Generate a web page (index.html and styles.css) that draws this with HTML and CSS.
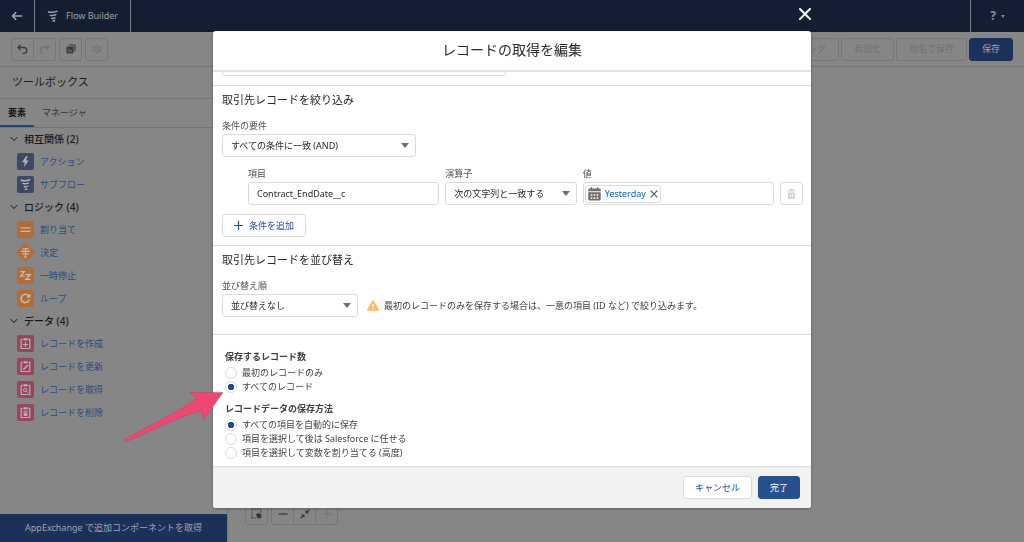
FILE: index.html
```html
<!DOCTYPE html>
<html lang="ja">
<head>
    <meta charset="UTF-8">
    <meta name="viewport" content="width=device-width, initial-scale=1.0">
    <title>Flow Builder</title>
    <link rel="stylesheet" href="styles.css">
</head>
<body>
    <div class="app">
        <header class="topbar">
            <a class="topbar-back" href="#" aria-label="戻る">
                <svg width="12" height="10" viewBox="0 0 12 10"><path d="M11 5H1.5M5.2 1.2L1.4 5l3.8 3.8" fill="none" stroke="currentColor" stroke-width="1.5"/></svg>
            </a>
            <div class="topbar-name">
                <svg width="12" height="12" viewBox="0 0 12 12"><path d="M1 1.800c2.500 1.200 5.500 .6 9.600-.7M2.800 5.200c2.200.7 4.200.3 6.600-.8M4.200 8.300c1.500.4 2.800.2 4.300-.5M5.600 10.900c1 .1 1.800 0 2.600-.4" fill="none" stroke="currentColor" stroke-width="1.500"/></svg>
                <span>Flow Builder</span>
            </div>
            <button class="topbar-help" type="button" aria-label="ヘルプ"><span>?</span><i class="caret"></i></button>
        </header>

        <div class="toolbar">
            <div class="group">
                <button class="icon-btn" type="button" aria-label="元に戻す">
                    <svg width="11" height="11" viewBox="0 0 11 11"><path d="M3.5 1L1 3.5 3.5 6M1.2 3.5h5.6a2.9 2.9 0 0 1 0 5.8H5.5" fill="none" stroke="currentColor" stroke-width="1.3"/></svg>
                </button>
                <button class="icon-btn" type="button" aria-label="やり直し" disabled>
                    <svg width="11" height="11" viewBox="0 0 11 11"><path d="M7.5 1L10 3.5 7.5 6M9.8 3.5H4.2a2.9 2.9 0 0 0 0 5.8h1.3" fill="none" stroke="currentColor" stroke-width="1.3"/></svg>
                </button>
            </div>
            <button class="icon-btn" type="button" aria-label="コピー">
                <svg width="10" height="10" viewBox="0 0 10 10"><path d="M2.5 1.2Q2.5.5 3.2.5h5.6q.7 0 .7.7v5.6q0 .7-.7.7H8.4V1.6H2.5z" fill="currentColor"/><rect x=".5" y="2.4" width="7" height="7.2" rx=".8" fill="currentColor"/><path d="M2 5h1.3M2 6.4h3.8M2 7.8h3.8" stroke="#888" stroke-width=".6"/></svg>
            </button>
            <button class="icon-btn" type="button" aria-label="設定" disabled>
                <svg width="10" height="10" viewBox="0 0 10 10"><circle cx="5" cy="5" r="3.2" fill="none" stroke="currentColor" stroke-width="1"/><circle cx="5" cy="5" r="1.2" fill="none" stroke="currentColor" stroke-width=".8"/><path d="M5 .4v1.2M5 8.4v1.2M1 2.7l1.1.6M7.9 6.7l1.1.6M1 7.3l1.1-.6M7.9 3.3L9 2.7" stroke="currentColor" stroke-width="1.5"/></svg>
            </button>
            <div class="toolbar-actions">
                <button class="btn-dim" type="button" disabled>デバッグ</button>
                <button class="btn-dim" type="button" disabled>有効化</button>
                <button class="btn-dim" type="button" disabled>別名で保存</button>
                <button class="btn-dim btn-save" type="button">保存</button>
            </div>
        </div>

        <div class="main">
            <aside class="sidebar">
                <h2 class="sidebar-title">ツールボックス</h2>
                <nav class="tabs">
                    <a class="tab active" href="#">要素</a>
                    <a class="tab" href="#">マネージャ</a>
                </nav>
                <div class="elements">
                    <h3 class="group-title"><svg width="8" height="6" viewBox="0 0 8 6"><path d="M.7 1L4 4.6 7.3 1" fill="none" stroke="currentColor"/></svg>相互関係 (2)</h3>
                    <ul class="items">
                        <li><a href="#"><svg class="tile" viewBox="0 0 17 17"><rect width="17" height="17" rx="2" fill="#3d4866"/><path d="M9.3 3L5 9.2h2.8L6.9 14l4.9-6.5H8.9L10.7 3z" fill="#b4b4b4"/></svg>アクション</a></li>
                        <li><a href="#"><svg class="tile" viewBox="0 0 17 17"><rect width="17" height="17" rx="2" fill="#3d4866"/><path d="M3.800 4c3 1.500 6 1 9.400-.5M5.400 7.400c2.200.8 4.300.4 6.400-.5M6.800 10.500c1.400.4 2.800.2 4.200-.4M7.800 13.300c1 .2 1.800 0 2.600-.4" fill="none" stroke="#b4b4b4" stroke-width="1.500"/></svg>サブフロー</a></li>
                    </ul>
                    <h3 class="group-title"><svg width="8" height="6" viewBox="0 0 8 6"><path d="M.7 1L4 4.6 7.3 1" fill="none" stroke="currentColor"/></svg>ロジック (4)</h3>
                    <ul class="items">
                        <li><a href="#"><svg class="tile" viewBox="0 0 17 17"><rect width="17" height="17" rx="2" fill="#b16c37"/><path d="M3.5 6.8h10M3.5 10.3h10" stroke="#c4c0bc" stroke-width="1.3"/></svg>割り当て</a></li>
                        <li><a href="#"><svg class="tile" viewBox="0 0 17 17"><rect x="1.5" y="1.5" width="14" height="14" rx="1.5" transform="rotate(45 8.5 8.5)" fill="#b16c37"/><path d="M5.5 4.900h6M4 7.400h9M5.500 9.800h6" stroke="#c4c0bc" stroke-width="1.200"/><path d="M8.500 4.500v6" stroke="#c4c0bc" stroke-width=".8"/><path d="M8.500 10.700l1.800 2.800H6.700z" fill="#c4c0bc"/></svg>決定</a></li>
                        <li><a href="#"><svg class="tile" viewBox="0 0 17 17"><rect width="17" height="17" rx="2" fill="#b16c37"/><path d="M3.4 4.6h4L3.6 9.2h4M8.8 7.6h4.4L9 12.4h4.4" fill="none" stroke="#c4c0bc" stroke-width="1.3"/></svg>一時停止</a></li>
                        <li><a href="#"><svg class="tile" viewBox="0 0 17 17"><rect width="17" height="17" rx="2" fill="#b16c37"/><path d="M12.4 9.4A4.2 4.2 0 1 1 11.6 5.7" fill="none" stroke="#c4c0bc" stroke-width="1.5"/><path d="M13.3 3.4v4.2H9.1z" fill="#c4c0bc"/></svg>ループ</a></li>
                    </ul>
                    <h3 class="group-title"><svg width="8" height="6" viewBox="0 0 8 6"><path d="M.7 1L4 4.6 7.3 1" fill="none" stroke="currentColor"/></svg>データ (4)</h3>
                    <ul class="items">
                        <li><a href="#"><svg class="tile" viewBox="0 0 17 17"><rect width="17" height="17" rx="2" fill="#96455d"/><path d="M4.2 4.3v9.2h8.6V4.3h-1.5M4.2 4.3h1.5" fill="none" stroke="#b4b4b4" stroke-width="1.2"/><path d="M6.5 3.2h4v2.2h-4z" fill="#b4b4b4"/><path d="M8.5 7v5M6 9.5h5" stroke="#b4b4b4" stroke-width="1.1"/></svg>レコードを作成</a></li>
                        <li><a href="#"><svg class="tile" viewBox="0 0 17 17"><rect width="17" height="17" rx="2" fill="#96455d"/><path d="M4.2 4.3v9.2h8.6V4.3h-1.5M4.2 4.3h1.5" fill="none" stroke="#b4b4b4" stroke-width="1.2"/><path d="M6.5 3.2h4v2.2h-4z" fill="#b4b4b4"/><path d="M6.3 11.6l4.8-4.6" stroke="#b4b4b4" stroke-width="1.5"/></svg>レコードを更新</a></li>
                        <li><a href="#"><svg class="tile" viewBox="0 0 17 17"><rect width="17" height="17" rx="2" fill="#96455d"/><path d="M4.2 4.3v9.2h8.6V4.3h-1.5M4.2 4.3h1.5" fill="none" stroke="#b4b4b4" stroke-width="1.2"/><path d="M6.5 3.2h4v2.2h-4z" fill="#b4b4b4"/><circle cx="8.2" cy="9" r="1.7" fill="none" stroke="#b4b4b4"/><path d="M9.5 10.3l1.6 1.6" stroke="#b4b4b4"/></svg>レコードを取得</a></li>
                        <li><a href="#"><svg class="tile" viewBox="0 0 17 17"><rect width="17" height="17" rx="2" fill="#96455d"/><path d="M4.2 4.3v9.2h8.6V4.3h-1.5M4.2 4.3h1.5" fill="none" stroke="#b4b4b4" stroke-width="1.2"/><path d="M6.5 3.2h4v2.2h-4z" fill="#b4b4b4"/><path d="M6 7.8h5M7.8 7h1.4" stroke="#b4b4b4" stroke-width=".9"/><path d="M6.6 8.8h3.8v3.2H6.6z" fill="#b4b4b4"/></svg>レコードを削除</a></li>
                    </ul>
                </div>
                <a class="exchange" href="#">AppExchange で追加コンポーネントを取得</a>
            </aside>
            <div class="canvas">
                <button class="icon-btn" type="button" aria-label="選択">
                    <svg width="11" height="11" viewBox="0 0 11 11"><path d="M1 10V1h9v4M1 10h4" fill="none" stroke="currentColor" stroke-dasharray="1.4 1"/><path d="M4.5 5.5l1.6.8.6-1.5 3.6 1.5v3.9H6.6z" fill="currentColor"/></svg>
                </button>
                <div class="group">
                    <button class="icon-btn" type="button" aria-label="縮小"><svg width="10" height="10" viewBox="0 0 10 10"><path d="M.5 5h9" stroke="currentColor" stroke-width="1.3"/></svg></button>
                    <button class="icon-btn" type="button" aria-label="全体を表示"><svg width="10" height="10" viewBox="0 0 10 10"><path d="M5.5.9l3.6 3.6H5.5zM.9 5.5h3.6v3.6z" fill="currentColor"/><path d="M9.3.7L6.2 3.8M.7 9.3l3.1-3.1" stroke="currentColor" stroke-width="1.4"/></svg></button>
                    <button class="icon-btn" type="button" aria-label="拡大" disabled><svg width="10" height="10" viewBox="0 0 10 10"><path d="M.5 5h9M5 .5v9" stroke="currentColor"/></svg></button>
                </div>
            </div>
        </div>
    </div>

    <div class="overlay">
        <section class="modal" role="dialog" aria-modal="true" aria-labelledby="modalTitle">
            <button class="modal-close" type="button" aria-label="閉じる">
                <svg width="12" height="12" viewBox="0 0 12 12"><path d="M1 1l10 10M11 1L1 11" stroke="currentColor" stroke-width="2" stroke-linecap="round"/></svg>
            </button>
            <h1 class="modal-title" id="modalTitle">レコードの取得を編集</h1>

            <div class="modal-body">
                <div class="scrolled-out">
                    <input class="field" type="text" aria-label="オブジェクト">
                </div>

                <section class="block filter">
                    <h2>取引先レコードを絞り込み</h2>
                    <label class="label" for="requirement">条件の要件</label>
                    <div class="select requirement">
                        <select class="field" id="requirement"><option>すべての条件に一致 (AND)</option></select>
                    </div>
                    <div class="condition">
                        <div class="column">
                            <label class="label" for="item">項目</label>
                            <input class="field" id="item" type="text" value="Contract_EndDate__c">
                        </div>
                        <div class="column">
                            <label class="label" for="operator">演算子</label>
                            <div class="select">
                                <select class="field" id="operator"><option>次の文字列と一致する</option></select>
                            </div>
                        </div>
                        <div class="column">
                            <label class="label" for="value">値</label>
                            <div class="field pill-box">
                                <span class="pill">
                                    <svg width="13" height="14" viewBox="0 0 13 14"><path d="M1.3 1.6h1.4V.8q0-.8.7-.8t.7.8v.8h4.8V.8q0-.8.7-.8t.7.8v.8h1.4q1 0 1 1v1.6H.3V2.6q0-1 1-1zM.3 5.3h12.4V12.5q0 1-1 1H1.3q-1 0-1-1z" fill="#706e6b"/><path d="M2.7 8h1.7M5.6 8h1.7M8.6 8h1.7M2.7 11h1.7M5.6 11h1.7M8.6 11h1.7" stroke="#fff" stroke-width="1.7"/></svg>
                                    <a href="#">Yesterday</a>
                                    <button type="button" aria-label="削除"><svg width="8" height="8" viewBox="0 0 8 8"><path d="M.7.7l6.6 6.6M7.3.7L.7 7.3" stroke="currentColor" stroke-width="1.2"/></svg></button>
                                </span>
                                <input id="value" type="text">
                            </div>
                        </div>
                        <button class="btn btn-trash" type="button" aria-label="条件を削除" disabled>
                            <svg width="9" height="10" viewBox="0 0 9 10"><path d="M.3 2h8.4M3 1.8V.7h3v1.1" fill="none" stroke="currentColor" stroke-width="1.2"/><path d="M1 3.5h7V9q0 .9-.9.9H1.9Q1 9.9 1 9z" fill="currentColor"/><path d="M3.5 5v3.2M5.5 5v3.2" stroke="#fff" stroke-width=".8"/></svg>
                        </button>
                    </div>
                    <button class="btn btn-add" type="button">
                        <svg width="9" height="9" viewBox="0 0 9 9"><path d="M0 4.5h9M4.5 0v9" stroke="currentColor" stroke-width="1.2"/></svg>条件を追加
                    </button>
                </section>

                <section class="block sort">
                    <h2>取引先レコードを並び替え</h2>
                    <label class="label" for="order">並び替え順</label>
                    <div class="sort-row">
                        <div class="select order">
                            <select class="field" id="order"><option>並び替えなし</option></select>
                        </div>
                        <p class="warning">
                            <svg width="12" height="11" viewBox="0 0 12 11"><path d="M5.3.7q.7-1.1 1.4 0l5 8.8q.5 1.1-.7 1.2H1Q-.2 10.6.3 9.5z" fill="#ffb75d"/><path d="M6 3.6v3.4M6 8.1v1.2" stroke="#fff" stroke-width="1.2"/></svg>
                            最初のレコードのみを保存する場合は、一意の項目 (ID など) で絞り込みます。
                        </p>
                    </div>
                </section>

                <section class="block store">
                    <fieldset>
                        <legend>保存するレコード数</legend>
                        <label class="radio"><input type="radio" name="count">最初のレコードのみ</label>
                        <label class="radio"><input type="radio" name="count" checked>すべてのレコード</label>
                    </fieldset>
                    <fieldset>
                        <legend>レコードデータの保存方法</legend>
                        <label class="radio"><input type="radio" name="method" checked>すべての項目を自動的に保存</label>
                        <label class="radio"><input type="radio" name="method">項目を選択して後は Salesforce に任せる</label>
                        <label class="radio"><input type="radio" name="method">項目を選択して変数を割り当てる (高度)</label>
                    </fieldset>
                </section>
            </div>

            <footer class="modal-footer">
                <button class="btn" type="button">キャンセル</button>
                <button class="btn btn-brand" type="button">完了</button>
            </footer>

            <!-- Pointer to the selected option -->
            <svg class="pointer" width="104" height="56" viewBox="0 0 104 56" aria-hidden="true"><path d="M101 3.5H67.5l7 6C55 24 24 38 2.5 50.5q-1.5 2 1 2.5C30 42 60 26 79.500 22l2 9z" fill="#ee4870" stroke="#a8455f" stroke-width=".4"/></svg>
        </section>
    </div>
</body>
</html>
```
FILE: styles.css
```css
* {
    box-sizing: border-box;
}
body {
    margin: 0;
    font-family: "Noto Sans", "Noto Sans CJK JP", sans-serif;
    font-size: 9px;
    line-height: 12px;
    color: #2b2826;
    background-color: #868686;
}
h1, h2, h3, p, ul, fieldset {
    margin: 0;
    padding: 0;
    font-weight: normal;
}
ul {
    list-style: none;
}
a {
    text-decoration: none;
}
button, input, select {
    font: inherit;
    color: inherit;
    margin: 0;
}
svg {
    flex: none;
    display: block;
}

/* Page behind the dialog */
.app {
    display: flex;
    flex-direction: column;
    height: 100vh;
}
.topbar {
    display: flex;
    height: 32px;
    background-color: #131e33;
    color: #a0a3a8;
}
.topbar-back, .topbar-name, .topbar-help {
    display: flex;
    align-items: center;
    justify-content: center;
    border: 0 solid #777b83;
}
.topbar-back {
    width: 35px;
    border-right-width: 1px;
    color: #aaa;
}
.topbar-name {
    gap: 7px;
    padding: 0 12px;
    border-right-width: 1px;
}
.topbar-help {
    width: 54px;
    gap: 5px;
    margin-left: auto;
    padding: 0;
    background: none;
    border-left-width: 1px;
    font-size: 12px;
    font-weight: bold;
    color: #888b90;
}
.caret {
    border: 2px solid transparent;
    border-top: 3px solid #888b90;
    border-bottom: 0;
}
.toolbar {
    display: flex;
    align-items: center;
    gap: 3px;
    height: 35px;
    padding: 0 11px;
    border-bottom: 1px solid #757575;
}
.group {
    display: flex;
}
.icon-btn {
    display: flex;
    align-items: center;
    justify-content: center;
    width: 23px;
    height: 23px;
    padding: 0;
    background: none;
    border: 1px solid #767676;
    border-radius: 3px;
    color: #383838;
}
.icon-btn:disabled {
    color: #737373;
}
.group .icon-btn:not(:first-child) {
    margin-left: -1px;
    border-top-left-radius: 0;
    border-bottom-left-radius: 0;
}
.group .icon-btn:not(:last-child) {
    border-top-right-radius: 0;
    border-bottom-right-radius: 0;
}
.toolbar-actions {
    display: flex;
    gap: 2px;
    margin-left: auto;
}
.btn-dim {
    height: 23px;
    padding: 0 12px;
    background: none;
    border: 1px solid #767676;
    border-radius: 3px;
    color: #707070;
}
.btn-save {
    background-color: #1a315a;
    border-color: #1a315a;
    color: #a0a5ae;
}
.main {
    display: flex;
    flex: 1;
    min-height: 0;
}
.sidebar {
    display: flex;
    flex-direction: column;
    width: 228px;
    border-right: 1px solid #757575;
}
.sidebar-title {
    padding: 6px 12px 8px;
    font-size: 11px;
    line-height: 17px;
    color: #181818;
    border-bottom: 1px solid #757575;
}
.tabs {
    display: flex;
    border-bottom: 1px solid #757575;
}
.tab {
    padding: 8px 8px 6px;
    color: #333;
    border-bottom: 2px solid transparent;
}
.tab.active {
    font-weight: bold;
    color: #111;
    border-bottom-color: #1b417c;
}
.elements {
    flex: 1;
}
.group-title {
    display: flex;
    align-items: center;
    gap: 6px;
    height: 22px;
    padding-left: 10px;
    font-size: 10px;
    font-weight: 500;
    color: #181818;
}
.items a {
    display: flex;
    align-items: center;
    gap: 6px;
    height: 23px;
    padding-left: 17px;
    color: #234a83;
}
.tile {
    width: 17px;
    height: 17px;
    overflow: visible;
}
.exchange {
    padding: 8px 0;
    text-align: center;
    background-color: #1a315a;
    color: #a0a5ae;
}
.canvas {
    display: flex;
    flex: 1;
    align-items: flex-end;
    gap: 3px;
    padding: 17px;
}

/* Dialog */
.overlay {
    position: fixed;
    inset: 0;
    display: flex;
    justify-content: center;
    padding: 31px 0 34px;
}
.modal {
    position: relative;
    display: flex;
    flex-direction: column;
    width: 58.4%;
    background-color: #fff;
    border-radius: 3px;
    box-shadow: 0 1px 3px rgba(0, 0, 0, 0.3);
}
.modal-close {
    position: absolute;
    top: -23px;
    right: 0;
    padding: 0;
    background: none;
    border: 0;
    color: #fff;
}
.modal-title {
    padding: 8px 9px 10px;
    font-size: 14px;
    line-height: 21px;
    text-align: center;
    border-bottom: 2px solid #e4e4e4;
}
.modal-body {
    flex: 1;
    min-height: 0;
    overflow-x: hidden;
    overflow-y: auto;
}
.scrolled-out {
    display: flex;
    align-items: flex-end;
    height: 13px;
    padding: 0 9px 9px;
    overflow: hidden;
}
.scrolled-out .field {
    width: 49%;
}
.block {
    padding: 6px 8px 8px 9px;
    border-top: 1px solid #dddbda;
}
.block h2 {
    margin-bottom: 12px;
    font-size: 11px;
    line-height: 16px;
}
.label {
    display: block;
    margin-bottom: 2px;
    color: #514f4d;
}
.field {
    display: block;
    width: 100%;
    height: 23px;
    padding: 0 8px;
    background-color: #fff;
    border: 1px solid #dddbda;
    border-radius: 3px;
    appearance: none;
}
.select {
    position: relative;
}
.select::after {
    content: "";
    position: absolute;
    top: 9px;
    right: 7px;
    border: 4px solid transparent;
    border-top: 5px solid #706e6b;
    border-bottom: 0;
    pointer-events: none;
}
.requirement {
    width: 194px;
}
.condition {
    display: grid;
    grid-template-columns: 192fr 132fr 192fr 23px;
    gap: 6px;
    align-items: end;
    margin: 11px 0 9px;
    padding-left: 26px;
}
.column {
    min-width: 0;
}
.pill-box {
    display: flex;
    align-items: center;
    padding: 0 1px;
}
.pill-box input {
    flex: 1;
    width: 0;
    min-width: 0;
    border: 0;
    outline: 0;
    background: none;
}
.pill {
    display: flex;
    align-items: center;
    gap: 4px;
    height: 18px;
    padding: 0 2px;
    border: 1px solid #dddbda;
    border-radius: 3px;
}
.pill a {
    color: #0b62c4;
}
.pill button {
    padding: 0;
    background: none;
    border: 0;
    color: #555;
}
.btn {
    display: flex;
    align-items: center;
    justify-content: center;
    height: 23px;
    padding: 0 11px;
    background-color: #fff;
    border: 1px solid #dddbda;
    border-radius: 3px;
    color: #24508f;
}
.btn-trash {
    padding: 0;
    color: #d4d2d1;
}
.btn-add {
    gap: 6px;
}
.btn-brand {
    background-color: #27508f;
    border-color: #27508f;
    color: #fff;
}
.sort {
    padding-bottom: 17px;
}
.sort-row {
    display: flex;
    align-items: center;
    gap: 9px;
}
.order {
    width: 136px;
}
.warning {
    display: flex;
    align-items: center;
    gap: 5px;
    color: #3e3e3c;
}
.store {
    padding: 16px 12px 0;
}
fieldset {
    border: 0;
}
fieldset + fieldset {
    margin-top: 9px;
}
legend {
    margin-bottom: 3px;
    padding: 0;
    font-weight: bold;
    color: #3e3e3c;
}
.radio {
    display: flex;
    align-items: center;
    gap: 5px;
    height: 14px;
    color: #3e3e3c;
}
.radio input {
    width: 12px;
    height: 12px;
    background-color: #fff;
    border: 1px solid #dddbda;
    border-radius: 50%;
    appearance: none;
}
.radio input:checked {
    background-image: radial-gradient(circle, #1f4b91 0 2px, #1f4b91 3px, transparent 3px);
}
.modal-footer {
    display: flex;
    justify-content: flex-end;
    gap: 6px;
    padding: 9px 11px;
    background-color: #f3f2f2;
    border-top: 1px solid #dddbda;
    border-radius: 0 0 3px 3px;
}
.pointer {
    position: absolute;
    top: 358px;
    left: -91px;
    pointer-events: none;
}
```
